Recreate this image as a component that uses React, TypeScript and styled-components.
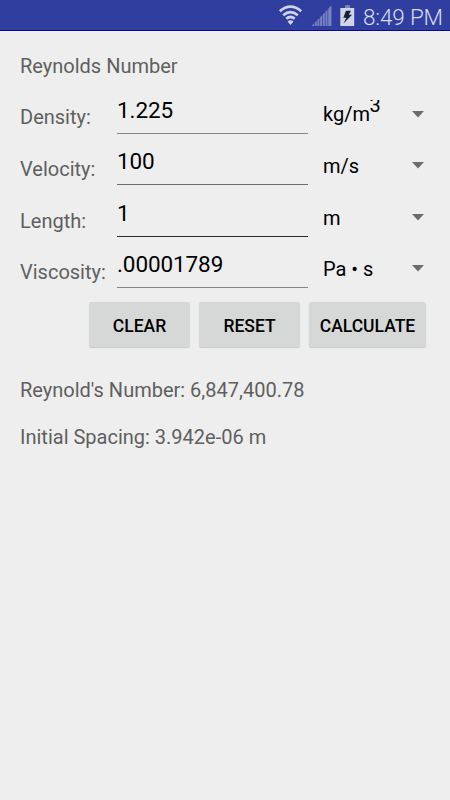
import React, { useState } from "react";
import styled, { createGlobalStyle } from "styled-components";

const GlobalStyle = createGlobalStyle`
  * { box-sizing: border-box; }
  body { margin: 0; background: #eeeeee; font-family: Roboto, sans-serif; }
`;

const Screen = styled.main`
  width: 450px;
  height: 800px;
  overflow: hidden;
  background: #eeeeee;
  display: flex;
  flex-direction: column;
`;

const StatusBar = styled.header`
  height: 31px;
  flex: none;
  background: #303f9f;
  border-bottom: 1px solid #0a0a94;
  display: flex;
  padding-left: 278px;
  color: #d8dbef;
`;

const StatusIcons = styled.svg`
  flex: none;
  width: 78px;
  height: 30px;
`;

const Clock = styled.time`
  margin-left: 7px;
  padding-top: 5px;
  font-size: 22.5px;
  font-weight: 300;
  line-height: 24px;
  letter-spacing: -0.15px;
  white-space: nowrap;
`;

const Title = styled.h1`
  margin: 23px 0 0 20px;
  height: 38px;
  font-size: 20px;
  font-weight: 400;
  line-height: 24px;
  color: #5f5f5f;
`;

const Row = styled.div`
  display: grid;
  grid-template-columns: 97px 191px 1fr;
  height: 51.67px;
  padding-left: 20px;
  flex: none;
`;

const Label = styled.label`
  padding-top: 13.4px;
  font-size: 20px;
  line-height: 24px;
  color: #5f5f5f;
  white-space: nowrap;
`;

const Field = styled.input<{ $line: string }>`
  width: 191px;
  height: 41.5px;
  padding: 6px 0 11.5px;
  border: 0;
  border-bottom: 1px solid ${(p) => p.$line};
  border-radius: 0;
  outline: 0;
  background: transparent;
  color: #000;
  font: 22.5px/24px Roboto, sans-serif;
  letter-spacing: -0.1px;
`;

const Spinner = styled.div`
  display: flex;
  justify-content: space-between;
  height: 43px;
  padding: 8px 26px 0 15px;
  color: #000;
`;

const Unit = styled.span`
  height: 30px;
  padding-top: 2.4px;
  overflow: hidden;
  font-size: 20px;
  line-height: 24px;
  white-space: nowrap;
`;

const Power = styled.sup`
  position: relative;
  top: -9px;
  margin-left: -0.5px;
  font-size: 20px;
  line-height: 0;
  vertical-align: baseline;
`;

const Arrow = styled.svg`
  width: 12px;
  height: 7px;
  margin-top: 10.5px;
  fill: #6b6b6b;
`;

const Actions = styled.div`
  display: flex;
  gap: 9px;
  padding: 3px 24px 0 89px;
`;

const Button = styled.button<{ $wide?: boolean }>`
  width: ${(p) => (p.$wide ? 117 : 101)}px;
  height: 45px;
  padding: 3px 0 0;
  border: 0;
  border-radius: 2.5px;
  background: #d6d8d7;
  box-shadow: 0 1px 1px rgba(0, 0, 0, 0.16);
  color: #000;
  font: 500 17.5px/24px Roboto, sans-serif;
`;

const Results = styled.section`
  display: flex;
  flex-direction: column;
  gap: 23px;
  padding: 31px 20px 0;
`;

const Result = styled.p`
  margin: 0;
  font-size: 20px;
  line-height: 24px;
  color: #5f5f5f;
`;

const inputs = [
  { label: "Density:", value: "1.225", unit: <>kg/m<Power>3</Power></>, line: "#858585" },
  { label: "Velocity:", value: "100", unit: "m/s", line: "#6e6e6e" },
  { label: "Length:", value: "1", unit: "m", line: "#292929" },
  { label: "Viscosity:", value: ".00001789", unit: "Pa • s", line: "#858585" },
];

export default function App() {
  const [values, setValues] = useState(inputs.map((i) => i.value));
  return (
    <Screen>
      <GlobalStyle />
      <StatusBar>
        <StatusIcons viewBox="0 0 78 30" aria-hidden="true">
          <g fill="none" stroke="#d0d3ea" strokeWidth="2.7">
            <path d="M1.8 11.2Q12.5 2.2 23.2 11.2" />
            <path d="M5.2 15.2Q12.5 9 19.8 15.2" />
            <path d="M8.3 18.8Q12.5 15.2 16.7 18.8" />
          </g>
          <path d="M9.5 21.5Q12.5 19.2 15.5 21.5L12.5 25Z" fill="#d0d3ea" />
          <path
            d="M33.5 26l2.5-2.5V26zM36.7 26v-3.2l2-2V26zM39.4 26v-6l2-2v8zM42.1 26v-8.8l2-2V26zM44.8 26V14.5l2-2V26zM47.5 26V11.7l2-2V26zM50.2 26V8.7l3.3-3.3V26z"
            fill="#7882c0"
          />
          <path d="M67 5.2h5v3h-5z" fill="#7d86c2" />
          <path d="M62.3 8h13.9v18H62.3z" fill="#d0d3ea" />
          <path d="M68 10.8h5l-2.2 4h3.3L65.5 23.6l2.8-5.8h-3z" fill="#172033" />
        </StatusIcons>
        <Clock>8:49 PM</Clock>
      </StatusBar>
      <Title>Reynolds Number</Title>
      {inputs.map((item, i) => (
        <Row key={item.label}>
          <Label htmlFor={`field-${i}`}>{item.label}</Label>
          <Field
            id={`field-${i}`}
            $line={item.line}
            value={values[i]}
            onChange={(e) => setValues(values.map((v, n) => (n === i ? e.target.value : v)))}
          />
          <Spinner>
            <Unit>{item.unit}</Unit>
            <Arrow viewBox="0 0 12 7"><path d="M0 0h12L6 6.5z" /></Arrow>
          </Spinner>
        </Row>
      ))}
      <Actions>
        <Button onClick={() => setValues(inputs.map(() => ""))}>CLEAR</Button>
        <Button onClick={() => setValues(inputs.map((i) => i.value))}>RESET</Button>
        <Button $wide>CALCULATE</Button>
      </Actions>
      <Results>
        <Result>Reynold's Number: 6,847,400.78</Result>
        <Result>Initial Spacing: 3.942e-06 m</Result>
      </Results>
    </Screen>
  );
}
